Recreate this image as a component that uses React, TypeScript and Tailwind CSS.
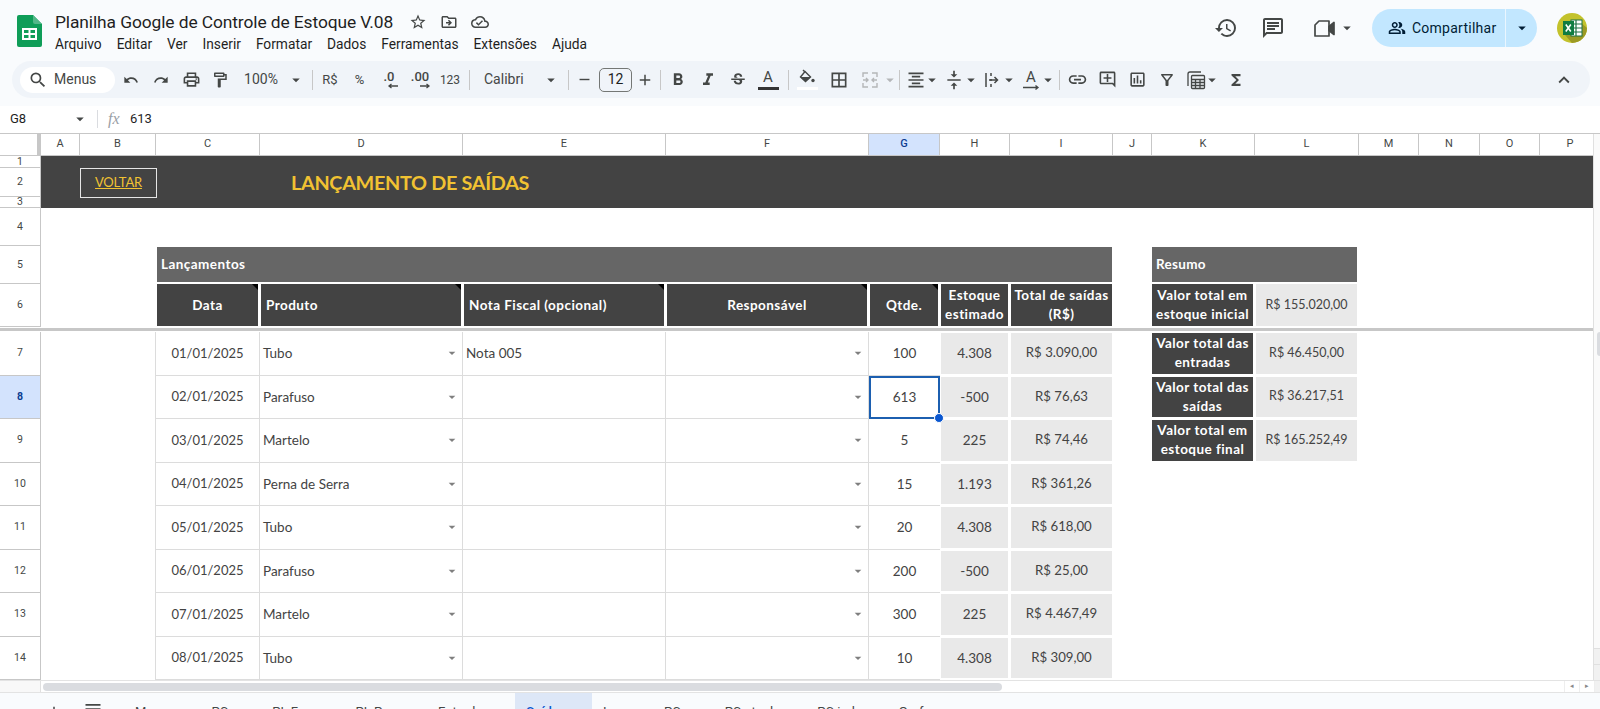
import React from "react";
import {
  MdAdd,
  MdArrowDropDown,
  MdBorderAll,
  MdExpandLess,
  MdFormatAlignCenter,
  MdFormatBold,
  MdFormatItalic,
  MdFunctions,
  MdHistory,
  MdLink,
  MdMenu,
  MdOutlineAddComment,
  MdOutlineChat,
  MdOutlineCloudDone,
  MdOutlineDriveFileMove,
  MdOutlineFilterAlt,
  MdOutlineFormatPaint,
  MdOutlineInsertChart,
  MdOutlineLocalPrintshop,
  MdOutlinePeopleAlt,
  MdOutlineStarBorder,
  MdRedo,
  MdRemove,
  MdSearch,
  MdStrikethroughS,
  MdUndo,
  MdVerticalAlignCenter,
} from "react-icons/md";

const cols =
  "grid grid-cols-[41px_39px_76px_104px_203px_203px_203px_71px_70px_103px_39px_103px_104px_60px_61px_60px_61px]";

const columnLetters = ["A", "B", "C", "D", "E", "F", "G", "H", "I", "J", "K", "L", "M", "N", "O", "P"];

const rows = [
  { n: 7, date: "01/01/2025", product: "Tubo", note: "Nota 005", qty: "100", stock: "4.308", total: "R$ 3.090,00" },
  { n: 8, date: "02/01/2025", product: "Parafuso", note: "", qty: "613", stock: "-500", total: "R$ 76,63" },
  { n: 9, date: "03/01/2025", product: "Martelo", note: "", qty: "5", stock: "225", total: "R$ 74,46" },
  { n: 10, date: "04/01/2025", product: "Perna de Serra", note: "", qty: "15", stock: "1.193", total: "R$ 361,26" },
  { n: 11, date: "05/01/2025", product: "Tubo", note: "", qty: "20", stock: "4.308", total: "R$ 618,00" },
  { n: 12, date: "06/01/2025", product: "Parafuso", note: "", qty: "200", stock: "-500", total: "R$ 25,00" },
  { n: 13, date: "07/01/2025", product: "Martelo", note: "", qty: "300", stock: "225", total: "R$ 4.467,49" },
  { n: 14, date: "08/01/2025", product: "Tubo", note: "", qty: "10", stock: "4.308", total: "R$ 309,00" },
];

const summary: Record<number, { label: string[]; value: string }> = {
  7: { label: ["Valor total das", "entradas"], value: "R$ 46.450,00" },
  8: { label: ["Valor total das", "saídas"], value: "R$ 36.217,51" },
  9: { label: ["Valor total em", "estoque final"], value: "R$ 165.252,49" },
};

const tabs = ["Menu", "PC", "PL Fac", "PL Pro", "Entrada", "Saída", "Inv", "PC", "PC atual", "PC ind", "Graf"];

const menus = ["Arquivo", "Editar", "Ver", "Inserir", "Formatar", "Dados", "Ferramentas", "Extensões", "Ajuda"];

const Sep = ({ className }: { className: string }) => <div className={`h-[20px] w-px bg-[#c7c7c7] ${className}`} />;

const Tool = ({ className, children }: { className: string; children?: React.ReactNode }) => (
  <div className={`flex h-full shrink-0 items-center justify-center text-[#444746] ${className}`}>{children}</div>
);

const Caret = ({ className }: { className: string }) => (
  <Tool className={className}>
    <MdArrowDropDown size={18} className="shrink-0" />
  </Tool>
);

const SheetsLogo = () => (
  <svg width="25" height="32" viewBox="0 0 25 32">
    <path d="M2 0h14l9 9v21a2 2 0 0 1-2 2H2a2 2 0 0 1-2-2V2a2 2 0 0 1 2-2z" fill="#0f9d58" />
    <path d="M16 0l9 9h-7a2 2 0 0 1-2-2z" fill="#52b788" />
    <path d="M6 14h13v10H6z" fill="none" stroke="#fff" strokeWidth="2" />
    <path d="M12.5 14v10M6 19h13" stroke="#fff" strokeWidth="2" />
  </svg>
);

const ExcelAvatar = () => (
  <svg width="30" height="30" viewBox="0 0 30 30">
    <circle cx="15" cy="15" r="15" fill="#c3c22c" />
    <path d="M15 30a15 15 0 0 0 15-15L22 8 8 22z" fill="#9c9a24" />
    <rect x="14" y="7" width="11" height="16" fill="#fff" stroke="#1e7145" strokeWidth="1" />
    <path d="M14 11h11M14 15h11M14 19h11M19 7v16" stroke="#1e7145" strokeWidth="1.2" />
    <rect x="6" y="8" width="11" height="14" fill="#107c41" />
    <path d="M8.8 11.5l5 7M13.8 11.5l-5 7" stroke="#fff" strokeWidth="1.6" />
  </svg>
);

const VideoIcon = () => (
  <svg width="21" height="17" viewBox="0 0 21 17" fill="none" stroke="#444746" strokeWidth="1.7" strokeLinejoin="round">
    <path d="M5 1h10v15H1V5z" />
    <path d="M15 6.5l5-4v12l-5-4z" fill="#444746" />
  </svg>
);

const BucketIcon = () => (
  <svg width="18" height="16" viewBox="0 0 18 16">
    <path d="M5 1l2 2" stroke="#444746" strokeWidth="1.4" fill="none" />
    <path d="M7 2.5l5.5 5.5-5 4.5-5-4.5z" fill="none" stroke="#444746" strokeWidth="1.4" />
    <path d="M2.5 8h10l-5 4.5z" fill="#444746" />
    <circle cx="15" cy="11.5" r="1.7" fill="#444746" />
  </svg>
);

const MergeIcon = () => (
  <svg width="20" height="20" viewBox="0 0 20 20" fill="none" stroke="#b4b6b8" strokeWidth="1.4">
    <path d="M3 7V3h5M3 13v4h5M17 7V3h-5M17 13v4h-5M3 10h5M6 8l2 2-2 2M17 10h-5M14 8l-2 2 2 2" />
  </svg>
);

const WrapIcon = () => (
  <svg width="20" height="20" viewBox="0 0 20 20" fill="none" stroke="#444746" strokeWidth="1.5">
    <path d="M4 3v14M9 3v3M9 9v2M9 14v3M7 10h8M12.5 7l3 3-3 3" />
  </svg>
);

const RotateIcon = () => (
  <div className="relative flex h-[20px] w-[20px] flex-col items-center">
    <span className="text-[15px] leading-[15px] font-['Roboto',sans-serif]">A</span>
    <svg width="20" height="5" viewBox="0 0 20 5" fill="none" stroke="#444746" strokeWidth="1.3">
      <path d="M2 2.5h15M14.5 0.5l2.5 2-2.5 2" />
    </svg>
  </div>
);

const CalcIcon = () => (
  <svg width="22" height="22" viewBox="0 0 22 22" fill="none" stroke="#444746" strokeWidth="1.3">
    <path d="M3 17V5a2 2 0 0 1 2-2h11" />
    <rect x="6.5" y="6.5" width="13" height="13" rx="1" />
    <path d="M7 10.5h12M7 13.5h12M7 16.5h12M10.5 10.5v9M15 10.5v9" />
  </svg>
);

const DecimalIcon = ({ label, right }: { label: string; right?: boolean }) => (
  <div className="flex flex-col items-center font-['Roboto',sans-serif] text-[13px] leading-[13px] font-medium">
    <span>{label}</span>
    <svg width="12" height="6" viewBox="0 0 12 6" fill="none" stroke="#444746" strokeWidth="1.3" className={right ? "ml-[10px]" : "ml-[8px]"}>
      {right ? <path d="M1 3h9M7.5 1l2.5 2-2.5 2" /> : <path d="M11 3H2M4.5 1L2 3l2.5 2" />}
    </svg>
  </div>
);

const Header = () => (
  <header className="flex h-[61px] shrink-0 items-start bg-[#f9fbfd] font-['Roboto',sans-serif]">
    <div className="ml-[17px] mt-[15px]">
      <SheetsLogo />
    </div>
    <div className="ml-[13px] flex flex-col">
      <div className="mt-[9px] flex h-[26px] items-center text-[#1f1f1f]">
        <span className="text-[17.4px] leading-[26px] tracking-[-0.1px]">Planilha Google de Controle de Estoque V.08</span>
        <MdOutlineStarBorder size={18} className="ml-[16px] text-[#444746]" />
        <MdOutlineDriveFileMove size={18} className="ml-[13px] text-[#444746]" />
        <MdOutlineCloudDone size={18} className="ml-[13px] text-[#444746]" />
      </div>
      <nav className="mt-[-1px] flex h-[20px] items-center gap-[15px] text-[13.75px] text-[#1f1f1f]">
        {menus.map((m) => (
          <span key={m}>{m}</span>
        ))}
      </nav>
    </div>
    <div className="ml-auto mr-[13px] mt-[9px] flex h-[38px] items-center text-[#444746]">
      <MdHistory size={24} />
      <MdOutlineChat size={24} className="ml-[23px]" />
      <div className="ml-[26px] flex w-[26px] justify-center">
        <VideoIcon />
      </div>
      <Caret className="ml-[3px] w-[14px]" />
      <div className="ml-[18px] flex h-[38px] w-[165px] overflow-hidden rounded-full bg-[#c2e7ff] text-[#001d35]">
        <div className="flex w-[133px] items-center gap-[6px] pl-[16px] text-[14px] tracking-[0.25px]">
          <MdOutlinePeopleAlt size={18} />
          <span>Compartilhar</span>
        </div>
        <div className="w-px bg-[#eaf6ff]" />
        <div className="flex flex-1 items-center justify-center">
          <MdArrowDropDown size={18} />
        </div>
      </div>
      <div className="ml-[20px] h-[30px] w-[30px]">
        <ExcelAvatar />
      </div>
    </div>
  </header>
);

const Toolbar = () => (
  <div className="h-[45px] shrink-0 bg-[#f9fbfd] px-[10px] font-['Roboto',sans-serif] text-[13px]">
    <div className="ml-[2px] mr-0 flex h-[37px] w-[1578px] items-center rounded-full bg-[#f0f4f9] pl-[8px]">
      <div className="flex h-[26px] w-[95px] items-center gap-[6px] rounded-full bg-white pl-[8px] text-[#444746]">
        <MdSearch size={20} />
        <span className="text-[14px]">Menus</span>
      </div>
      <Tool className="ml-px w-[30px]"><MdUndo size={16} /></Tool>
      <Tool className="w-[30px]"><MdRedo size={16} /></Tool>
      <Tool className="w-[30px]"><MdOutlineLocalPrintshop size={19} /></Tool>
      <Tool className="w-[28px]"><MdOutlineFormatPaint size={18} /></Tool>
      <Tool className="ml-[4px] w-[46px] text-[14px]">100%</Tool>
      <Caret className="w-[24px]" />
      <Sep className="ml-[4px]" />
      <Tool className="ml-[2px] w-[30px]">R$</Tool>
      <Tool className="w-[29px]">%</Tool>
      <Tool className="w-[30px]"><DecimalIcon label=".0" /></Tool>
      <Tool className="w-[32px]"><DecimalIcon label=".00" right /></Tool>
      <Tool className="w-[28px] text-[12px]">123</Tool>
      <Sep className="ml-[5px]" />
      <Tool className="w-[70px] justify-start pl-[14px] text-[14px]">Calibri</Tool>
      <Caret className="w-[22px]" />
      <Sep className="ml-[6px]" />
      <Tool className="w-[30px]"><MdRemove size={17} /></Tool>
      <div className="flex h-[24px] w-[33px] items-center justify-center rounded-[5px] border border-[#747775] text-[14px] text-[#1f1f1f]">12</div>
      <Tool className="w-[26px]"><MdAdd size={18} /></Tool>
      <Sep className="ml-[2px]" />
      <Tool className="ml-[2px] w-[30px]"><MdFormatBold size={20} /></Tool>
      <Tool className="w-[30px]"><MdFormatItalic size={20} /></Tool>
      <Tool className="w-[30px]"><MdStrikethroughS size={18} /></Tool>
      <Tool className="w-[30px] flex-col">
        <span className="h-[17px] text-[15px] leading-[17px]">A</span>
        <div className="mt-px h-[3px] w-[21px] bg-[#333]" />
      </Tool>
      <Sep className="ml-[5px]" />
      <Tool className="ml-[3px] w-[30px] flex-col">
        <BucketIcon />
        <div className="mt-[2px] h-[3px] w-[21px] bg-white" />
      </Tool>
      <Tool className="ml-[2px] w-[30px]"><MdBorderAll size={20} /></Tool>
      <Tool className="ml-px w-[30px]"><MergeIcon /></Tool>
      <Tool className="w-[10px] text-[#b4b6b8]"><MdArrowDropDown size={18} className="shrink-0" /></Tool>
      <Sep className="ml-[4px]" />
      <Tool className="ml-[4px] w-[24px]"><MdFormatAlignCenter size={20} /></Tool>
      <Caret className="w-[8px]" />
      <Tool className="ml-[6px] w-[24px]"><MdVerticalAlignCenter size={20} /></Tool>
      <Caret className="w-[10px]" />
      <Tool className="ml-[4px] w-[24px]"><WrapIcon /></Tool>
      <Caret className="w-[10px]" />
      <Tool className="ml-[5px] w-[24px]"><RotateIcon /></Tool>
      <Caret className="w-[10px]" />
      <Sep className="ml-[6px]" />
      <Tool className="ml-[2px] w-[30px]"><MdLink size={21} /></Tool>
      <Tool className="w-[30px]"><MdOutlineAddComment size={19} /></Tool>
      <Tool className="w-[30px]"><MdOutlineInsertChart size={19} /></Tool>
      <Tool className="w-[30px]"><MdOutlineFilterAlt size={18} /></Tool>
      <Tool className="ml-[2px] w-[24px]"><CalcIcon /></Tool>
      <Caret className="w-[8px]" />
      <Tool className="ml-[8px] w-[24px]"><MdFunctions size={18} /></Tool>
      <Tool className="ml-auto mr-[14px] w-[24px]"><MdExpandLess size={22} /></Tool>
    </div>
  </div>
);

const FormulaBar = () => (
  <div className="flex h-[28px] shrink-0 items-center border-b border-[#c7c7c7] bg-white pb-px font-['Roboto',sans-serif] text-[13px] text-[#1f1f1f]">
    <span className="ml-[10px] w-[61px]">G8</span>
    <MdArrowDropDown size={18} className="text-[#444746]" />
    <div className="ml-[8px] h-[18px] w-px bg-[#dadce0]" />
    <span className="ml-[10px] w-[22px] font-['Liberation_Serif',serif] text-[16px] italic text-[#9aa0a6]">fx</span>
    <span>613</span>
  </div>
);

const RowHead = ({ children, active }: { children: React.ReactNode; active?: boolean }) => (
  <div
    className={`flex items-center justify-center border-b border-r border-[#c7c7c7] font-['Roboto',sans-serif] text-[10.5px] ${
      active ? "bg-[#d3e3fd] font-bold text-[#0b3d91]" : "bg-white text-[#444746]"
    }`}
  >
    {children}
  </div>
);

const NoteMark = () => (
  <span className="absolute right-0 top-0 border-l-[6px] border-t-[6px] border-l-transparent border-t-black" />
);

const HeadCell = ({ children, note, left }: { children: React.ReactNode; note?: boolean; left?: boolean }) => (
  <div
    className={`relative ml-[1px] mr-[2px] mb-px flex items-center bg-[#434343] text-[13.5px] leading-[19px] font-bold tracking-[0.45px] text-white ${
      left ? "justify-start pl-[5px]" : "justify-center text-center"
    }`}
  >
    {children}
    {note && <NoteMark />}
  </div>
);

const GrayCell = ({ children, small }: { children: React.ReactNode; small?: boolean }) => (
  <div
    className={`mb-[2px] ml-[1px] mr-[2px] mt-px flex items-center justify-center bg-[#e9e9e9] text-[#434343] ${
      small ? "text-[12.5px]" : ""
    }`}
  >
    {children}
  </div>
);

const DarkLabel = ({ lines }: { lines: string[] }) => (
  <div className="mb-[2px] mr-[2px] mt-px flex flex-col items-center justify-center bg-[#434343] text-[13.5px] leading-[19px] font-bold tracking-[0.45px] text-white">
    {lines.map((l) => (
      <span key={l}>{l}</span>
    ))}
  </div>
);

const DropCell = ({ children }: { children?: React.ReactNode }) => (
  <div className="flex items-center justify-between border-b border-r border-[#dcdcdc] pl-[3px] pr-[2px] text-[#434343]">
    <span>{children}</span>
    <MdArrowDropDown size={16} className="text-[#7f7f7f]" />
  </div>
);

const Sheet = () => (
  <div className="relative w-[1594px] overflow-hidden border-r border-[#e0e0e0] font-['Lato',sans-serif] text-[13.5px]">
    {/* frozen rows 1 to 6 */}
    <div className={`${cols} grid-rows-[22px_12px_29px_11px_38px_38px_43px]`}>
      <div className="border-b border-r-4 border-[#c7c7c7] bg-white" />
      {columnLetters.map((c) => (
        <div
          key={c}
          className={`flex items-center justify-center border-b border-r border-[#c7c7c7] font-['Roboto',sans-serif] text-[11px] ${
            c === "G" ? "bg-[#d3e3fd] font-medium text-[#0b3d91]" : "bg-white text-[#444746]"
          }`}
        >
          {c}
        </div>
      ))}

      <RowHead>1</RowHead>
      <div className="col-span-16 row-span-3 flex items-center bg-[#434343] pt-[1px]">
        <div className="ml-[39px] flex h-[30px] w-[77px] items-center justify-center border border-[#e6e6e6] text-[13px] tracking-[-0.2px] text-[#f1c232] underline">
          VOLTAR
        </div>
        <h1 className="ml-[134px] text-[19.8px] font-bold tracking-[-0.3px] text-[#f1c232]">LANÇAMENTO DE SAÍDAS</h1>
      </div>
      <RowHead>2</RowHead>
      <RowHead>3</RowHead>

      <RowHead>4</RowHead>
      <div className="col-span-16" />

      <RowHead>5</RowHead>
      <div className="col-span-2" />
      <div className="col-span-7 ml-[1px] mr-[1px] mt-px mb-[2px] flex items-center bg-[#666666] pl-[4px] font-bold tracking-[0.45px] text-white">Lançamentos</div>
      <div />
      <div className="col-span-2 mr-[2px] mt-px mb-[2px] flex items-center bg-[#666666] pl-[4px] font-bold tracking-[0.3px] text-white">Resumo</div>
      <div className="col-span-4" />

      <RowHead>6</RowHead>
      <div className="col-span-2" />
      <HeadCell note>Data</HeadCell>
      <HeadCell note left>Produto</HeadCell>
      <HeadCell note left>Nota Fiscal (opcional)</HeadCell>
      <HeadCell note>Responsável</HeadCell>
      <HeadCell note>Qtde.</HeadCell>
      <HeadCell>
        <span>
          Estoque
          <br />
          estimado
        </span>
      </HeadCell>
      <div className="mb-px ml-[1px] mr-[1px] flex items-center justify-center bg-[#434343] text-center text-[13.5px] leading-[19px] font-bold tracking-[0.45px] text-white">
        <span>
          Total de saídas
          <br />
          (R$)
        </span>
      </div>
      <div />
      <div className="mb-px mr-[2px] flex items-center justify-center bg-[#434343] text-center text-[13.5px] leading-[19px] font-bold tracking-[0.45px] text-white">
        <span>
          Valor total em
          <br />
          estoque inicial
        </span>
      </div>
      <div className="mb-px ml-[1px] mr-[2px] flex items-center justify-center bg-[#e9e9e9] text-[12.5px] text-[#434343]">R$ 155.020,00</div>
      <div className="col-span-4" />
    </div>

    {/* freeze line */}
    <div className="h-[5px] border-y border-white bg-[#c7c7c7]" />

    {/* rows 7 to 14 */}
    <div className={`${cols} auto-rows-[43.5px]`}>
      {rows.map((r) => (
        <React.Fragment key={r.n}>
          <RowHead active={r.n === 8}>{r.n}</RowHead>
          <div className="col-span-2 border-r border-[#dcdcdc]" />
          <div className="flex items-center justify-center border-b border-r border-[#dcdcdc] text-[13px] text-[#434343]">{r.date}</div>
          <DropCell>{r.product}</DropCell>
          <div className="flex items-center border-b border-r border-[#dcdcdc] pl-[3px] text-[#434343]">{r.note}</div>
          <DropCell />
          {r.n === 8 ? (
            <div className="relative flex items-center justify-center border-2 border-[#1c5fb0] text-[#434343]">
              {r.qty}
              <span className="absolute bottom-[-6px] right-[-6px] h-[10px] w-[10px] rounded-full border border-white bg-[#0b57d0]" />
            </div>
          ) : (
            <div className="flex items-center justify-center border-b border-[#dcdcdc] text-[#434343]">{r.qty}</div>
          )}
          <GrayCell>{r.stock}</GrayCell>
          <div className="mb-[2px] ml-[1px] mr-[1px] mt-px flex items-center justify-center bg-[#e9e9e9] text-[13.2px] text-[#434343]">{r.total}</div>
          <div />
          {summary[r.n] ? (
            <>
              <DarkLabel lines={summary[r.n].label} />
              <GrayCell small>{summary[r.n].value}</GrayCell>
            </>
          ) : (
            <div className="col-span-2" />
          )}
          <div className="col-span-4" />
        </React.Fragment>
      ))}
    </div>
  </div>
);

const ScrollGutter = () => (
  <div className="flex w-[6px] flex-col bg-[#fafafa]">
    <div className="h-[198px]" />
    <div className="ml-[3px] h-[24px] w-[3px] rounded-l-sm bg-[#dadce0]" />
    <div className="flex-1" />
    <div className="h-[16px] border-t border-[#e0e0e0] bg-[#f1f1f1]" />
    <div className="h-[16px] border-t border-[#e0e0e0] bg-[#f1f1f1]" />
  </div>
);

const HScroll = () => (
  <div className="flex h-[13px] shrink-0 items-center border-y border-[#e3e3e3] bg-white">
    <div className="h-full w-[41px] border-r border-[#e0e0e0] bg-[#f8f8f8]" />
    <div className="ml-[2px] h-[8px] w-[959px] rounded-full bg-[#dadce0]" />
    <div className="ml-auto flex h-full items-center">
      <div className="flex h-full w-[15px] items-center justify-center border-l border-[#eeeeee] text-[7px] text-[#888]">◂</div>
      <div className="flex h-full w-[15px] items-center justify-center border-l border-[#eeeeee] text-[7px] text-[#888]">▸</div>
      <div className="h-full w-[6px] border-l border-[#eeeeee] bg-[#f1f1f1]" />
    </div>
  </div>
);

const TabBar = () => (
  <div className="flex min-h-0 flex-1 items-start overflow-hidden bg-[#f9fbfd] font-['Roboto',sans-serif] text-[13px] text-[#444746]">
    <MdAdd size={18} className="ml-[45px] mt-[10px] shrink-0" />
    <MdMenu size={20} className="ml-[20px] mt-[6px] shrink-0" />
    <div className="ml-[21px] flex h-[30px]">
      {tabs.map((t, i) => (
        <div
          key={i}
          className={`flex shrink-0 items-start pl-[11px] pr-[11px] pt-[9px] ${t === "Saída" ? "bg-[#dde7f7] font-medium text-[#0b57d0]" : ""}`}
        >
          <span>{t}</span>
          <MdArrowDropDown size={14} className="ml-[8px] mt-[2px]" />
        </div>
      ))}
    </div>
  </div>
);

export default function App() {
  return (
    <div className="flex h-[709px] w-[1600px] flex-col overflow-hidden bg-white">
      <Header />
      <Toolbar />
      <FormulaBar />
      <div className="flex h-[546px] shrink-0 overflow-hidden">
        <Sheet />
        <ScrollGutter />
      </div>
      <HScroll />
      <TabBar />
    </div>
  );
}
